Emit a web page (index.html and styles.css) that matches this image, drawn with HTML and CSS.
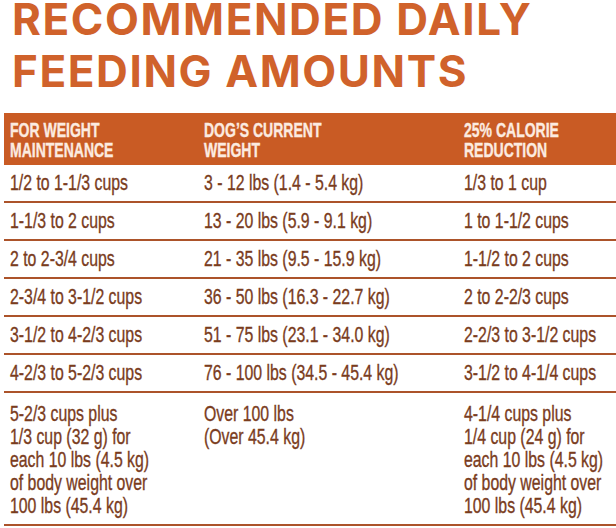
FILE: index.html
```html
<!DOCTYPE html>
<html>
<head>
<meta charset="utf-8">
<link rel="stylesheet" href="styles.css">
</head>
<body>
<div class="page">
  <h1 class="title"><span class="l1">RECOMMENDED DAILY</span><span class="l2">FEEDING AMOUNTS</span></h1>
  <div class="table">
    <div class="cell head"><span class="t">FOR WEIGHT<br>MAINTENANCE</span></div>
    <div class="cell head"><span class="t">DOG’S CURRENT<br>WEIGHT</span></div>
    <div class="cell head"><span class="t">25% CALORIE<br>REDUCTION</span></div>

    <div class="cell"><span class="t">1/2 to 1-1/3 cups</span></div>
    <div class="cell"><span class="t">3 - 12 lbs (1.4 - 5.4 kg)</span></div>
    <div class="cell"><span class="t">1/3 to 1 cup</span></div>

    <div class="cell"><span class="t">1-1/3 to 2 cups</span></div>
    <div class="cell"><span class="t">13 - 20 lbs (5.9 - 9.1 kg)</span></div>
    <div class="cell"><span class="t">1 to 1-1/2 cups</span></div>

    <div class="cell"><span class="t">2 to 2-3/4 cups</span></div>
    <div class="cell"><span class="t">21 - 35 lbs (9.5 - 15.9 kg)</span></div>
    <div class="cell"><span class="t">1-1/2 to 2 cups</span></div>

    <div class="cell"><span class="t">2-3/4 to 3-1/2 cups</span></div>
    <div class="cell"><span class="t">36 - 50 lbs (16.3 - 22.7 kg)</span></div>
    <div class="cell"><span class="t">2 to 2-2/3 cups</span></div>

    <div class="cell"><span class="t">3-1/2 to 4-2/3 cups</span></div>
    <div class="cell"><span class="t">51 - 75 lbs (23.1 - 34.0 kg)</span></div>
    <div class="cell"><span class="t">2-2/3 to 3-1/2 cups</span></div>

    <div class="cell"><span class="t">4-2/3 to 5-2/3 cups</span></div>
    <div class="cell"><span class="t">76 - 100 lbs (34.5 - 45.4 kg)</span></div>
    <div class="cell"><span class="t">3-1/2 to 4-1/4 cups</span></div>

    <div class="cell tall"><span class="t">5-2/3 cups plus<br>1/3 cup (32 g) for<br>each 10 lbs (4.5 kg)<br>of body weight over<br>100 lbs (45.4 kg)</span></div>
    <div class="cell tall"><span class="t">Over 100 lbs<br>(Over 45.4 kg)</span></div>
    <div class="cell tall"><span class="t">4-1/4 cups plus<br>1/4 cup (24 g) for<br>each 10 lbs (4.5 kg)<br>of body weight over<br>100 lbs (45.4 kg)</span></div>
  </div>
</div>
</body>
</html>
```

FILE: styles.css
```css
html, body {
  margin: 0;
  padding: 0;
  background: #ffffff;
}
.page {
  width: 616px;
  height: 528px;
  padding: 0 4px;
  box-sizing: border-box;
  overflow: hidden;
}
.title {
  margin: 0 0 9px 0;
  padding: 0 0 0 8px;
  font-family: Inter, "Liberation Sans", sans-serif;
  font-weight: 700;
  font-size: 44px;
  letter-spacing: 1.6px;
  color: #d0622b;
  white-space: nowrap;
}
.title .l1 {
  display: block;
  line-height: 38px;
}
.title .l2 {
  display: block;
  line-height: 66px;
}
.table {
  display: grid;
  grid-template-columns: 194px 260px 1fr;
}
.cell {
  font-family: "Liberation Sans", Arial, sans-serif;
  font-size: 22px;
  color: #7a3c1d;
  -webkit-text-stroke: 0.35px #7a3c1d;
  height: 38px;
  line-height: 36px;
  box-sizing: border-box;
  padding-left: 6px;
  border-bottom: 2px solid #ac532a;
  white-space: nowrap;
  overflow: visible;
}
.t {
  display: inline-block;
  transform: scaleX(0.72);
  transform-origin: 0 0;
}
.head {
  background: #c95b24;
  color: #fcebe0;
  -webkit-text-stroke: 0.35px #fcebe0;
  font-weight: 700;
  font-size: 20px;
  line-height: 20px;
  height: 52px;
  padding-top: 7px;
  border-bottom: none;
}
.head .t {
  transform: scaleX(0.7);
}
.tall {
  height: 133px;
  line-height: 23px;
  padding-top: 9px;
}
```
